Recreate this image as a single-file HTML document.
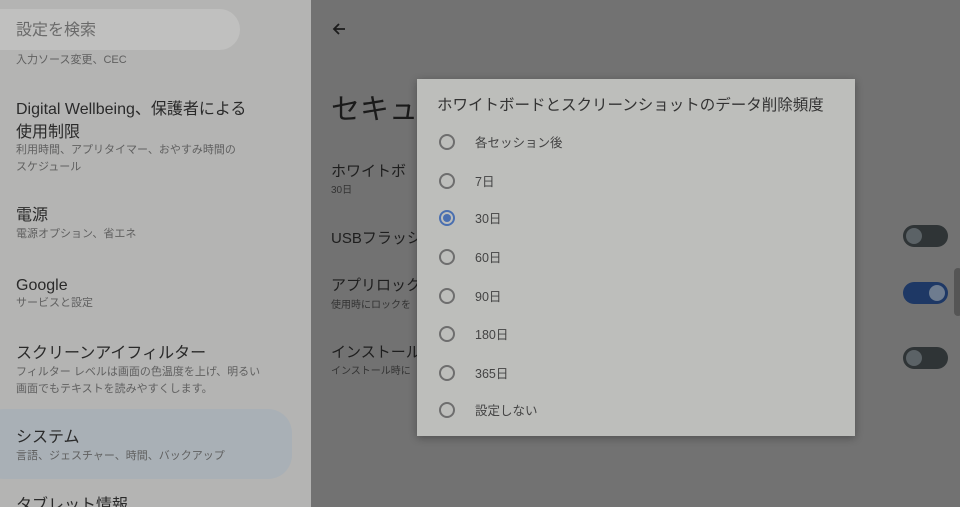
<!DOCTYPE html>
<html><head><meta charset="utf-8"><style>
*{margin:0;padding:0;box-sizing:border-box}
html,body{width:960px;height:507px;overflow:hidden}
body{position:relative;background:#727272;font-family:"Liberation Sans","Noto Sans CJK JP",sans-serif}
.left{position:absolute;left:0;top:0;width:311px;height:507px;background:#b4b4b3;overflow:hidden}
.t{position:absolute;white-space:nowrap;color:#2a2a2a;line-height:20px}
.s{position:absolute;white-space:nowrap;color:#606060;font-size:11px;line-height:17px}
.h{font-size:16px}
.dlg{position:absolute;left:417px;top:79px;width:438px;height:357px;background:#bdbebb;box-shadow:0 2px 8px rgba(0,0,0,.3)}
.r{position:absolute;left:22px;width:16px;height:16px;border:2px solid #6e6e6e;border-radius:50%}
.r.on{border-color:#4a6fb0}
.r.on::after{content:"";position:absolute;left:2px;top:2px;width:8px;height:8px;border-radius:50%;background:#4a6fb0}
.l{position:absolute;left:58px;font-size:12.5px;line-height:16px;color:#444;white-space:nowrap}
.tg{position:absolute;left:903px;width:45px;height:22px;border-radius:11px;background:#2f3436}
.tg::after{content:"";position:absolute;left:3px;top:3px;width:16px;height:16px;border-radius:50%;background:#5b6266}
.tg.on{background:#1e3865}
.tg.on::after{left:26px;background:#6e7c8f}
</style></head><body>
<div class="left">
 <div style="position:absolute;left:-20px;top:9px;width:260px;height:41px;border-radius:21px;background:#c0c0bf"></div>
 <div class="t" style="left:16px;top:21px;font-size:16px;color:#6a6a6a">設定を検索</div>
 <div class="s" style="left:16px;top:52px">入力ソース変更、CEC</div>
 <div class="t h" style="left:16px;top:98px;line-height:23px">Digital Wellbeing、保護者による<br>使用制限</div>
 <div class="s" style="left:16px;top:142px">利用時間、アプリタイマー、おやすみ時間の<br>スケジュール</div>
 <div class="t h" style="left:16px;top:206px">電源</div>
 <div class="s" style="left:16px;top:226px">電源オプション、省エネ</div>
 <div class="t h" style="left:16px;top:276px">Google</div>
 <div class="s" style="left:16px;top:295px">サービスと設定</div>
 <div class="t h" style="left:16px;top:344px">スクリーンアイフィルター</div>
 <div class="s" style="left:16px;top:364px">フィルター レベルは画面の色温度を上げ、明るい<br>画面でもテキストを読みやすくします。</div>
 <div style="position:absolute;left:-20px;top:409px;width:312px;height:70px;border-radius:24px;background:#a9b0b6"></div>
 <div class="t h" style="left:16px;top:428px">システム</div>
 <div class="s" style="left:16px;top:448px">言語、ジェスチャー、時間、バックアップ</div>
 <div class="t h" style="left:16px;top:496px">タブレット情報</div>
</div>
<svg style="position:absolute;left:332px;top:22px" width="14" height="14" viewBox="0 0 14 14"><path d="M13 7H2M7 2L2 7l5 5" fill="none" stroke="#1c1c1c" stroke-width="1.8"/></svg>
<div class="t" style="left:331px;top:92px;font-size:29px;line-height:36px;color:#1a1a1a">セキュ</div>
<div class="t" style="left:331px;top:162px;font-size:15px;color:#1e1e1e">ホワイトボ</div>
<div class="s" style="left:331px;top:182px;color:#333;font-size:10px">30日</div>
<div class="t" style="left:331px;top:229px;font-size:15px;color:#1e1e1e">USBフラッシ</div>
<div class="t" style="left:331px;top:276px;font-size:15px;color:#1e1e1e">アプリロック</div>
<div class="s" style="left:331px;top:297px;color:#333;font-size:10px">使用時にロックを</div>
<div class="t" style="left:331px;top:343px;font-size:15px;color:#1e1e1e">インストール</div>
<div class="s" style="left:331px;top:363px;color:#333;font-size:10px">インストール時に</div>
<div class="tg" style="top:225px"></div>
<div class="tg on" style="top:282px"></div>
<div class="tg" style="top:347px"></div>
<div style="position:absolute;left:954px;top:268px;width:8px;height:48px;border-radius:4px;background:#555"></div>
<div class="dlg">
 <div class="t" style="left:20px;top:17px;font-size:15.5px;color:#333">ホワイトボードとスクリーンショットのデータ削除頻度</div>
 <div class="r" style="top:55px"></div><div class="l" style="top:56px">各セッション後</div>
 <div class="r" style="top:94px"></div><div class="l" style="top:95px">7日</div>
 <div class="r on" style="top:131px"></div><div class="l" style="top:132px">30日</div>
 <div class="r" style="top:170px"></div><div class="l" style="top:171px">60日</div>
 <div class="r" style="top:209px"></div><div class="l" style="top:210px">90日</div>
 <div class="r" style="top:247px"></div><div class="l" style="top:248px">180日</div>
 <div class="r" style="top:286px"></div><div class="l" style="top:287px">365日</div>
 <div class="r" style="top:323px"></div><div class="l" style="top:324px">設定しない</div>
</div>
</body></html>
